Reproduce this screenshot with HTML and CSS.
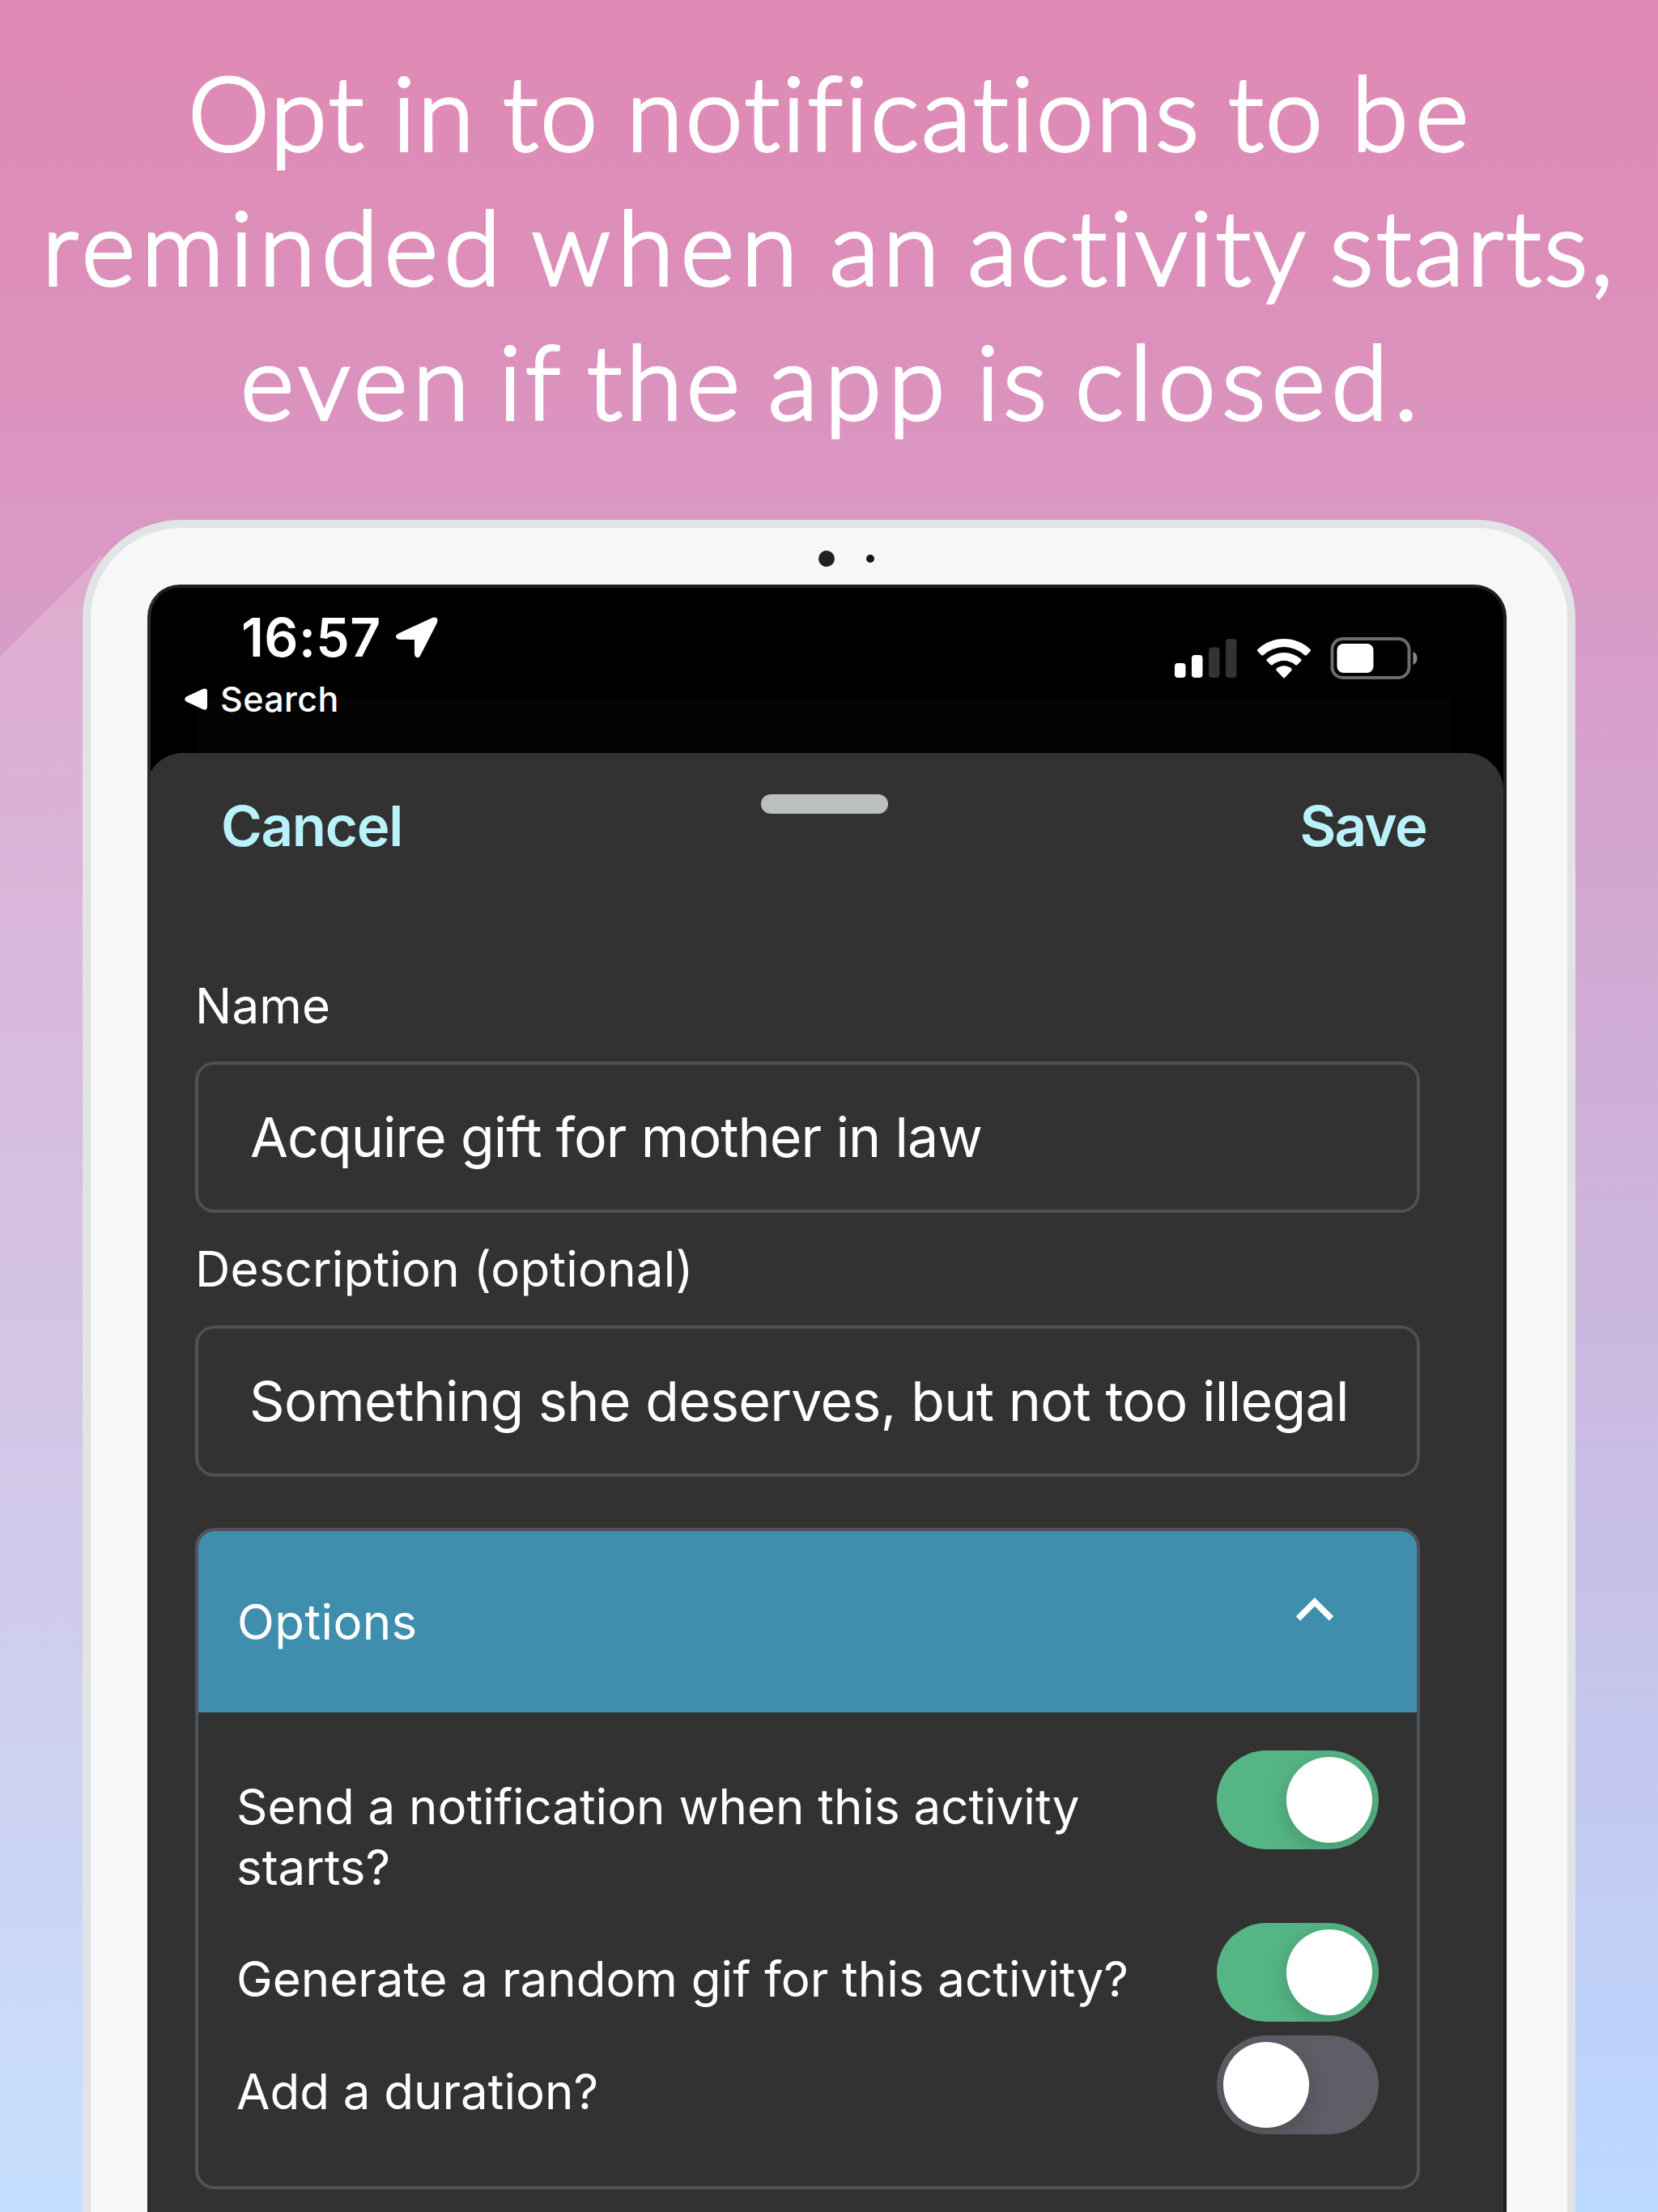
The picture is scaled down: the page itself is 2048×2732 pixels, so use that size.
FILE: index.html
```html
<!DOCTYPE html>
<html lang="en">
<head>
<meta charset="utf-8">
<title>Notifications</title>
<link rel="stylesheet" href="styles.css">
</head>
<body>
<main class="poster">
  <h1 class="headline">
    <span class="line line-1">Opt in to <span class="ease">notifications</span> to <span class="open">be</span></span>
    <span class="line line-2"><span class="wide">reminded</span> <span class="open">when</span> an <span class="snug">activity starts,</span></span>
    <span class="line line-3"><span class="airy">even</span> if the <span class="open">app</span> is <span class="wide">closed.</span></span>
  </h1>
  <section class="device">
    <div class="camera-bar"><i class="lens"></i><i class="sensor"></i></div>
    <div class="screen">
      <header class="status">
        <div class="status-left">
          <div class="clock">
            <span class="time">16:57</span>
            <svg class="location" width="52" height="51" viewBox="0 0 52 51"><path d="M4 20 45 1Q53-1 51 7L31 46Q29 51 26 50 23 49 23 45V28H5Q0 27 0 24 0 22 4 20Z" fill="#fff"/></svg>
          </div>
          <div class="back">
            <svg width="28" height="27" viewBox="0 0 28 27"><path d="M2 10.5 23 .8Q28-.8 28 4V23Q28 28 23 26.200L2 16.500Q-1.500 13.500 2 10.500Z" fill="#fff"/></svg>
            <span class="back-label">Search</span>
          </div>
        </div>
        <svg class="status-icons" width="301" height="52" viewBox="0 0 301 52">
          <g fill="#fff">
            <rect x="1" y="32" width="13.500" height="18" rx="4"/>
            <rect x="22" y="22" width="13.500" height="28" rx="4"/>
          </g>
          <g fill="#333">
            <rect x="43" y="12.500" width="13.500" height="37.500" rx="4"/>
            <rect x="64" y="2" width="13.500" height="48" rx="4"/>
          </g>
          <g fill="#fff">
            <path d="M103 15.500Q117 2 136 2T169 15.500V17L163.500 22.500H162Q150 12 136 12T110 22.500H108.500L103 17Z"/>
            <path d="M114.500 27.500Q124 19 136 19T157.500 27.500V29L152 34.500H150.500Q144 29 136 29T121.500 34.500H120L114.500 29Z"/>
            <path d="M126.500 39Q136 31.500 145.500 39V41L137 50Q136 51 135 50L126.500 41Z"/>
          </g>
          <rect x="195.500" y="2" width="95" height="48" rx="13" fill="none" stroke="#6b6b6b" stroke-width="4"/>
          <rect x="201.500" y="8" width="45" height="36" rx="8" fill="#fff"/>
          <path d="M295.500 18Q300.500 20 300.500 26T295.500 34Z" fill="#888"/>
        </svg>
      </header>
      <div class="behind"></div>
      <div class="sheet">
        <nav class="toolbar">
          <span class="action cancel">Cancel</span>
          <i class="grabber"></i>
          <span class="action save">Save</span>
        </nav>
        <form class="form">
          <label class="label">Name</label>
          <div class="field">Acquire gift for mother in law</div>
          <label class="label second">Description (optional)</label>
          <div class="field description">Something she deserves, but not too illegal</div>
          <section class="options">
            <div class="options-head">
              <span class="options-title">Options</span>
              <svg class="chevron" width="48" height="30" viewBox="0 0 48 30"><path d="M3.500 26 24 5.500 44.500 26" fill="none" stroke="#fff" stroke-width="7.500"/></svg>
            </div>
            <div class="row row-1"><p>Send a notification when this activity<br>starts?</p><i class="toggle on"></i></div>
            <div class="row row-2"><p>Generate a random gif for this activity?</p><i class="toggle on"></i></div>
            <div class="row row-3"><p>Add a duration?</p><i class="toggle"></i></div>
          </section>
        </form>
      </div>
    </div>
  </section>
</main>
</body>
</html>
```

FILE: styles.css
```css
* { box-sizing: border-box; }
body { margin: 0; font-family: Inter, "Liberation Sans", sans-serif; color: #fff; }
.poster {
  width: 2048px; height: 2732px; overflow: hidden;
  display: flex; flex-direction: column; align-items: center;
  background:
    linear-gradient(135deg, transparent 573px, rgba(255,255,255,.17) 574px) 0 0 / 125px 2732px no-repeat,
    linear-gradient(#df89b4 0, #dc90bb 400px, #d99ac5 700px, #d3a5d0 1050px, #cdb4dc 1500px, #c6c4eb 2050px, #c0d1f8 2450px, #bbd9ff 2732px);
}
.headline {
  flex: none; margin: 0; padding-top: 54px; height: 642px; width: 2048px; text-align: center;
  font: 300 127px/166px Lato, sans-serif; font-variant-ligatures: none; -webkit-text-stroke: 3.800px #fff;
}
.line { display: block; white-space: nowrap; }
.line-1 { letter-spacing: 2.600px; word-spacing: -4px; padding-left: 7px; }
.line-2 { letter-spacing: 4.300px; word-spacing: -8px; }
.line-3 { letter-spacing: 4.700px; word-spacing: -9px; padding-left: 8px; }
.snug { letter-spacing: 3.500px; }
.ease { letter-spacing: 3.100px; }
.airy { letter-spacing: 6.400px; }
.wide { letter-spacing: 7.500px; }
.open { letter-spacing: 8.500px; }
.device {
  width: 1844px; height: 2300px; flex: none;
  border: 10px solid #e1e3e4; border-radius: 122px 122px 0 0; background: #f6f7f9;
  padding: 0 75px 0 70px;
}
.camera-bar { height: 70px; display: flex; align-items: center; padding: 6px 0 0 829px; gap: 39px; }
.lens { width: 20px; height: 20px; border-radius: 50%; background: #222; }
.sensor { width: 10px; height: 10px; border-radius: 50%; background: #18181a; }
.screen {
  height: 2200px; border: 4px solid #1e2020; border-left-color: #2a2c2c; border-radius: 40px 40px 0 0; background: #000;
  overflow: hidden; display: flex; flex-direction: column;
}
.status { position: relative; z-index: 1; height: 137px; display: flex; justify-content: space-between; flex: none; }
.status-left { padding-left: 42px; }
.clock { display: flex; gap: 19px; padding: 36px 0 0 70px; height: 122px; }
.time { width: 172px; font-size: 66px; font-weight: 600; line-height: 50px; height: 52px; letter-spacing: .4px; }
.back { display: flex; gap: 16px; margin-top: 2px; }
.back-label { font-size: 43px; font-weight: 500; line-height: 27px; letter-spacing: .4px; }
.status-icons { margin: 61px 106px 0 0; }
.behind { height: 67px; width: 1547px; margin-left: 59px; background: #040404; flex: none; }
.sheet { flex: 1; margin-left: -6px; border-radius: 46px 46px 0 0; background: #323232; padding: 0 103px 0 61px; }
.toolbar {
  display: grid; grid-template-columns: 1fr auto 1fr; align-items: start;
  height: 249px; margin-right: -9px; padding: 51px 0 0 32px;
}
.action { color: #b9f2fa; font-size: 69px; font-weight: 600; line-height: 84px; margin-top: -3px; letter-spacing: -1.3px; }
.save { text-align: right; letter-spacing: -1.7px; padding-right: 1px; }
.grabber { width: 157px; height: 24px; border-radius: 12px; background: #bbbfc0; }
.label { display: block; font-size: 60px; line-height: 126px; height: 132px; letter-spacing: .2px; }
.label.second { line-height: 138px; height: 139px; }
.field {
  height: 187px; border: 4px solid #505050; border-radius: 24px; padding-left: 64px;
  font-size: 68px; line-height: 178px; letter-spacing: -.92px; white-space: nowrap;
}
.field.description { padding-left: 63px; letter-spacing: -.66px; }
.options {
  margin-top: 63px; height: 817px; border: 4px solid #52525a; border-radius: 24px;
  overflow: hidden; font-size: 60px; line-height: 75px; letter-spacing: 0;
}
.options-head { display: flex; justify-content: space-between; height: 224px; background: #3f8eae; padding: 75px 102px 0 48px; }
.options-title { letter-spacing: .4px; }
.chevron { margin-top: 7px; }
.row { display: flex; justify-content: space-between; padding: 0 47px 0 47px; }
.row-1 { padding-top: 47px; height: 260px; }
.row-2 { height: 139px; }
p { margin: 32px 0 0; white-space: nowrap; }
.toggle { width: 200px; height: 122px; border-radius: 61px; background: #5e5e66; padding: 8px; display: flex; overflow: hidden; }
.toggle::before { content: ""; width: 106px; height: 106px; border-radius: 50%; background: #fff; box-shadow: 0 8px 30px rgba(0,0,0,.18); }
.toggle.on { background: #55b585; justify-content: flex-end; }
```
